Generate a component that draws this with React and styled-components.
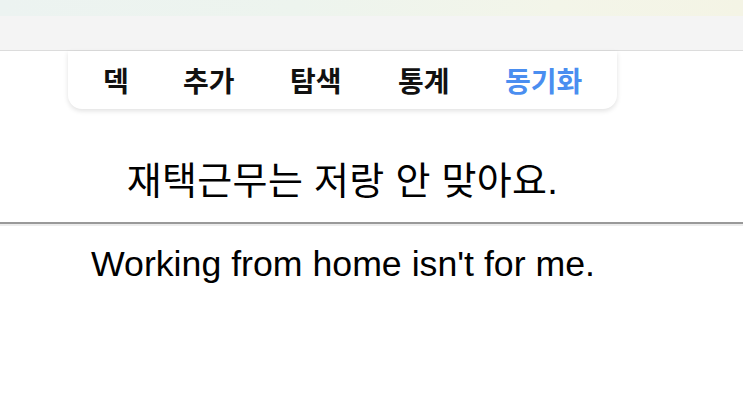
import styled, {createGlobalStyle} from "styled-components"

const Global = createGlobalStyle`
  html, body {
    margin: 0;
    padding: 0;
    background: #fff;
  }
  body {
    font-family: "Liberation Sans", "Noto Sans CJK KR", sans-serif;
    color: #000;
  }
`

const Page = styled.div`
  display: flex;
  flex-direction: column;
  min-height: 418px;
`

const TopStrip = styled.div`
  height: 16px;
  background: linear-gradient(90deg, #ecf3f1 0%, #edf4ee 40%, #f3f5e9 75%, #f4f4e5 100%);
`

const Bar = styled.div`
  height: 34px;
  background: #f4f4f4;
  border-bottom: 1px solid #dcdcdc;
`

const NavWrap = styled.div`
  display: flex;
  padding-left: 68px;
`

const Nav = styled.nav`
  width: 549px;
  height: 58px;
  display: flex;
  align-items: center;
  background: #fff;
  border-radius: 0 0 14px 14px;
  box-shadow: 0 2px 5px rgba(0, 0, 0, 0.12);
  box-sizing: border-box;
  padding-left: 35px;
`

const NavItem = styled.span`
  font-family: "Noto Sans CJK KR", sans-serif;
  font-weight: 700;
  font-size: 28px;
  line-height: 1;
  width: ${p => p.w}px;
  flex-shrink: 0;
  white-space: nowrap;
  color: ${p => (p.active ? "#4a8ef0" : "#111")};
`

const Korean = styled.div`
  margin-top: 50px;
  text-align: center;
  font-family: "Liberation Sans", "Noto Sans CJK KR", sans-serif;
  font-size: 38px;
  letter-spacing: 0.3px;
  line-height: 44px;
  padding-right: 58px;
`

const Divider = styled.div`
  margin-top: 19px;
  height: 2px;
  background: #999;
  border-bottom: 2px solid #ececec;
`

const English = styled.div`
  margin-top: 18px;
  padding-left: 91px;
  font-family: "Liberation Sans", Arial, sans-serif;
  font-size: 35.7px;
  line-height: 40px;
`

const items = [
  {label: "덱", w: 80},
  {label: "추가", w: 107},
  {label: "탐색", w: 108},
  {label: "통계", w: 107},
  {label: "동기화", w: 90, active: true},
]

export default function App() {
  return (
    <Page>
      <Global />
      <TopStrip />
      <Bar />
      <NavWrap>
        <Nav>
          {items.map(it => (
            <NavItem key={it.label} w={it.w} active={it.active}>
              {it.label}
            </NavItem>
          ))}
        </Nav>
      </NavWrap>
      <Korean>재택근무는 저랑 안 맞아요.</Korean>
      <Divider />
      <English>Working from home isn't for me.</English>
    </Page>
  )
}
